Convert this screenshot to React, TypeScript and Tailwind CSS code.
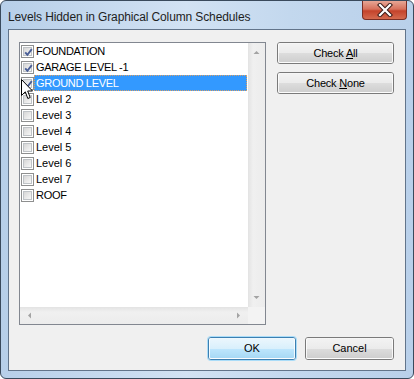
import React from 'react'

const levels = [
  { name: 'FOUNDATION', checked: true, caps: true },
  { name: 'GARAGE LEVEL -1', checked: true, caps: true },
  { name: 'GROUND LEVEL', checked: true, caps: true, selected: true },
  { name: 'Level 2', checked: false },
  { name: 'Level 3', checked: false },
  { name: 'Level 4', checked: false },
  { name: 'Level 5', checked: false },
  { name: 'Level 6', checked: false },
  { name: 'Level 7', checked: false },
  { name: 'ROOF', checked: false, caps: true },
]

const font = { fontFamily: "'Liberation Sans', Arial, sans-serif" }

function CheckBox({ checked }: { checked: boolean }) {
  return (
    <div className="w-[13px] h-[13px] shrink-0 border border-[#8e8f8f] bg-white p-[1px]">
      <div className="w-full h-full border border-[#bfc3c7] bg-gradient-to-br from-[#d6d6d6] to-[#f8f8f8] relative">
        {checked && (
          <svg className="absolute -left-[2px] -top-[2px]" width="13" height="13" viewBox="0 0 13 13">
            <path d="M3.2 6.3 L5.4 8.8 L9.8 3.2" fill="none" stroke="#4a5f97" strokeWidth="1.9" />
          </svg>
        )}
      </div>
    </div>
  )
}

function Arrow({ dir }: { dir: 'up' | 'down' | 'left' | 'right' }) {
  const d = {
    up: 'M0.5 4 L3.5 1 L6.5 4 Z',
    down: 'M0.5 1 L3.5 4 L6.5 1 Z',
    left: 'M4 0.5 L1 3.5 L4 6.5 Z',
    right: 'M1 0.5 L4 3.5 L1 6.5 Z',
  }[dir]
  const vert = dir === 'up' || dir === 'down'
  return (
    <svg width={vert ? 7 : 5} height={vert ? 5 : 7} viewBox={vert ? '0 0 7 5' : '0 0 5 7'}>
      <path d={d} fill="#a3a3a3" />
    </svg>
  )
}

function WinButton({ children, primary, className = '' }: { children: React.ReactNode; primary?: boolean; className?: string }) {
  return (
    <div
      className={`relative flex items-center justify-center rounded-[3px] border text-[11px] text-black ${
        primary ? 'border-[#3c7fb1] shadow-[0_0_0_1px_#aadcf8]' : 'border-[#7a7a7a]'
      } ${className}`}
      style={font}
    >
      <div
        className={`absolute inset-0 rounded-[2px] border border-white/80 ${
          primary
            ? 'bg-[linear-gradient(to_bottom,#eaf6fd_0%,#d9f0fc_50%,#bee6fd_51%,#a7d9f5_100%)]'
            : 'bg-[linear-gradient(to_bottom,#f2f2f2_0%,#ebebeb_50%,#dddddd_51%,#cfcfcf_100%)]'
        }`}
      />
      <span className="relative">{children}</span>
    </div>
  )
}

export default function App() {
  return (
    <div className="w-[414px] h-[379px] bg-white">
      <div className="w-[414px] h-[379px] flex flex-col rounded-[6px] border border-[#3a4a5c] bg-[linear-gradient(to_right,#b7cfe9_0%,#d2e2f3_45%,#c3d8ee_70%,#b9d0ea_100%)] overflow-hidden">
        {/* Title bar */}
        <div className="h-[28px] flex items-start justify-between pl-[7px]">
          <span className="mt-[7px] text-[12px] text-[#1e1e1e] tracking-[-0.12px]" style={font}>
            Levels Hidden in Graphical Column Schedules
          </span>
          <div className="mr-[6px] w-[45px] h-[19px] rounded-b-[4px] border border-t-0 border-[#7a2e24] bg-[linear-gradient(to_bottom,#e7a695_0%,#d7715c_45%,#c4432b_55%,#d46a4f_100%)] flex items-center justify-center">
            <svg width="16" height="14" viewBox="0 0 16 14">
              <path d="M3 2 L13 12 M13 2 L3 12" stroke="#3d1e1a" strokeWidth="4.2" strokeLinecap="square" />
              <path d="M3 2 L13 12 M13 2 L3 12" stroke="#ffffff" strokeWidth="2.2" strokeLinecap="square" />
            </svg>
          </div>
        </div>

        {/* Client area */}
        <div className="flex-1 mx-[7px] mb-[7px] border border-[#62748a] bg-[#f0f0f0] flex flex-col pl-[10px] pt-[12px]">
          <div className="flex">
            {/* Checked list box */}
            <div className="w-[247px] h-[283px] border border-[#828790] bg-white flex flex-col relative">
              <div className="flex flex-1">
                <div className="flex-1 flex flex-col">
                  {levels.map((lv) => (
                    <div key={lv.name} className="h-[16px] flex items-center pl-[1px]">
                      <CheckBox checked={lv.checked} />
                      <div
                        className={`flex-1 h-[16px] mr-[1px] flex items-center pl-[1px] pt-[1px] text-[11px] ${
                          lv.selected ? 'bg-[#3399ff] text-white border border-dotted border-[#d9a066]' : 'text-black border border-transparent'
                        } ${lv.caps ? 'tracking-[-0.3px]' : ''}`}
                        style={font}
                      >
                        {lv.name}
                      </div>
                    </div>
                  ))}
                </div>
                {/* vertical scrollbar */}
                <div className="w-[17px] flex flex-col items-center justify-between py-[7px] bg-[linear-gradient(to_right,#e3e3e3_0%,#f0f0f0_30%,#ececec_100%)]">
                  <Arrow dir="up" />
                  <Arrow dir="down" />
                </div>
              </div>
              {/* horizontal scrollbar */}
              <div className="h-[17px] flex">
                <div className="flex-1 flex items-center justify-between px-[7px] bg-[linear-gradient(to_bottom,#e3e3e3_0%,#f0f0f0_30%,#ececec_100%)]">
                  <Arrow dir="left" />
                  <Arrow dir="right" />
                </div>
                <div className="w-[17px] bg-[#f3f3f3]" />
              </div>

              {/* mouse cursor */}
              <svg className="absolute left-[1px] top-[36px]" width="13" height="21" viewBox="0 0 13 21">
                <path
                  d="M0.5 0.5 L0.5 16.5 L4.3 12.8 L6.8 19.5 L9.2 18.5 L6.7 12 L11.5 12 Z"
                  fill="#ffffff"
                  stroke="#000000"
                  strokeWidth="1"
                  strokeLinejoin="miter"
                />
              </svg>
            </div>

            {/* Side buttons */}
            <div className="ml-[11px] flex flex-col gap-[8px]">
              <WinButton className="w-[117px] h-[22px]">
                <span className="tracking-[-0.2px]">
                  Check <u>A</u>ll
                </span>
              </WinButton>
              <WinButton className="w-[117px] h-[22px]">
                <span className="tracking-[-0.2px]">
                  Check <u>N</u>one
                </span>
              </WinButton>
            </div>
          </div>

          {/* Bottom buttons */}
          <div className="mt-[12px] flex justify-end gap-[9px] pr-[11px]">
            <WinButton primary className="w-[88px] h-[23px]">
              OK
            </WinButton>
            <WinButton className="w-[89px] h-[23px]">Cancel</WinButton>
          </div>
        </div>
      </div>
    </div>
  )
}
